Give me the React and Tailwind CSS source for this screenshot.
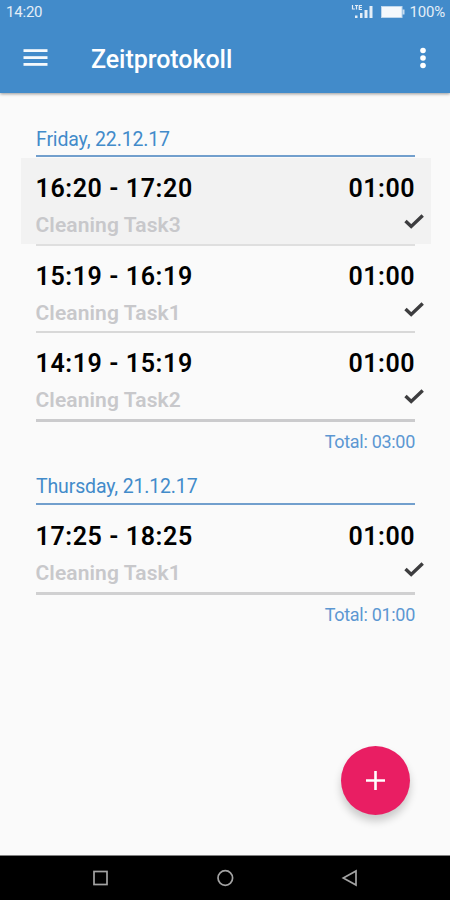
const days = [
  {
    label: 'Friday, 22.12.17',
    total: 'Total: 03:00',
    leading: 'leading-[34px]',
    entries: [
      { time: '16:20 - 17:20', task: 'Cleaning Task3', row: 'mt-px h-[88px]', active: true, line: 'h-[2px] bg-[#dfdfdf]' },
      { time: '15:19 - 16:19', task: 'Cleaning Task1', row: 'h-[87px]', line: 'h-[2px] bg-[#d8d8d8]' },
      { time: '14:19 - 15:19', task: 'Cleaning Task2', row: 'h-[89px]', line: 'h-[3px] bg-[#cbcbcd]' },
    ],
  },
  {
    label: 'Thursday, 21.12.17',
    total: 'Total: 01:00',
    leading: 'leading-[32px]',
    entries: [
      { time: '17:25 - 18:25', task: 'Cleaning Task1', row: 'mt-px h-[89px]', line: 'h-[3px] bg-[#d0d0d1]' },
    ],
  },
];

function StatusBar() {
  return (
    <div className="flex h-6 items-center pl-[6px] pr-[5px] text-[15px] tracking-[-0.2px] text-[#e4eef7]">
      <span>14:20</span>
      <svg className="ml-auto" width="22" height="16" viewBox="0 0 22 16" fill="#e4eef7">
        <path
          d="M1.500 1v4h2.400M4 1.500h3M5.500 1.500V5.500M11 1.500H8.300v4H11M8.300 3.500h2.500"
          fill="none"
          stroke="#e4eef7"
          strokeWidth="1.200"
        />
        <rect x="4" y="11.500" width="2.500" height="2.500" />
        <rect x="9" y="9" width="2.500" height="5" />
        <rect x="13.500" y="6" width="3" height="8" />
        <rect x="18.500" y="2" width="3" height="12" />
      </svg>
      <svg className="ml-[8px]" width="24" height="14" viewBox="0 0 24 14">
        <rect x="0.500" y="1.500" width="20.500" height="11" fill="#f4f8fc" stroke="#bdd6ec" />
        <rect x="21.500" y="4.500" width="2" height="5" fill="#c6dcef" />
      </svg>
      <span className="ml-[5px]">100%</span>
    </div>
  );
}

function Header() {
  return (
    <header className="h-[93px] bg-[#428bca] shadow-[0_1px_3px_rgba(0,0,0,0.4)]">
      <StatusBar />
      <div className="flex h-[68px] items-center pl-[23px] pr-[22px] text-white">
        <svg width="25" height="18" viewBox="0 0 25 18" fill="#f5f9fc">
          <rect x="0.500" y="0.200" width="24" height="2.800" />
          <rect x="0.500" y="7.200" width="24" height="2.800" />
          <rect x="0.500" y="14" width="24" height="2.800" />
        </svg>
        <h1 className="ml-[43px] mt-[3px] text-[25px] font-medium tracking-[-0.05px]">Zeitprotokoll</h1>
        <svg className="ml-auto" width="10" height="22" viewBox="0 0 10 22" fill="#fff">
          <circle cx="5" cy="3.500" r="2.800" />
          <circle cx="5" cy="11" r="2.800" />
          <circle cx="5" cy="18.500" r="2.800" />
        </svg>
      </div>
    </header>
  );
}

function Entry({ entry }) {
  return (
    <li className={`relative ml-[21px] mr-[19px] pl-[15px] pr-4 pt-[14px] ${entry.row}`}>
      {entry.active && <div className="absolute inset-x-0 top-0 -z-10 h-[86px] bg-[#f2f2f2]" />}
      <div className="flex justify-between text-[25px] font-semibold leading-[34px] text-black">
        <span className="-ml-[0.5px] tracking-[0.6px]">{entry.time}</span>
        <span className="tracking-[0.5px]">01:00</span>
      </div>
      <div className="-mr-[9px] flex justify-between">
        <span className="-ml-[0.5px] text-[21px] font-semibold leading-[38px] tracking-[0.1px] text-[#c8c8cb]">{entry.task}</span>
        <svg className="mt-[7px]" width="20" height="18" viewBox="0 0 20 18" fill="none" stroke="#3d3d3f" strokeWidth="3.400">
          <path d="M1.500 8L7.200 13.500L18.700 2.500" />
        </svg>
      </div>
      <div className={`absolute bottom-0 left-[15px] right-4 ${entry.line}`} />
    </li>
  );
}

function Day({ day }) {
  return (
    <section>
      <h2 className={`ml-9 mr-[35px] h-[34px] whitespace-nowrap border-b-2 border-[#729fcd] text-[19.500px] tracking-[-0.15px] text-[#428bca] ${day.leading}`}>
        {day.label}
      </h2>
      <ul>
        {day.entries.map((entry) => (
          <Entry key={entry.time} entry={entry} />
        ))}
      </ul>
      <div className="pr-[35px] text-right text-[18px] leading-[40px] tracking-[-0.3px] text-[#5c97d2]">{day.total}</div>
    </section>
  );
}

export default function App() {
  return (
    <div className="relative isolate flex h-[900px] w-[450px] flex-col overflow-hidden bg-[#fafafa] font-['Roboto','Liberation_Sans',sans-serif]">
      <Header />
      <main className="flex flex-1 flex-col gap-[9px] pt-[30px]">
        {days.map((day) => (
          <Day key={day.label} day={day} />
        ))}
      </main>
      <button
        aria-label="Add"
        className="absolute bottom-[85px] right-10 flex size-[69px] items-center justify-center rounded-full bg-[#e91e63] shadow-[0_6px_8px_rgba(0,0,0,0.2)]"
      >
        <svg width="19" height="19" viewBox="0 0 19 19" stroke="#fff" strokeWidth="2.600">
          <path d="M9.500 0v19M0 9.500h19" />
        </svg>
      </button>
      <nav className="flex h-[45px] items-center justify-between border-t border-[#808080] bg-black pl-[92px] pr-[91px]">
        <svg width="17" height="18" viewBox="0 0 17 18" fill="none" stroke="#a3a3a3" strokeWidth="1.700">
          <rect x="2" y="2.500" width="13" height="13" />
        </svg>
        <svg width="18" height="18" viewBox="0 0 18 18" fill="none" stroke="#a3a3a3" strokeWidth="1.700">
          <circle cx="9.300" cy="9" r="7.300" />
        </svg>
        <svg width="18" height="18" viewBox="0 0 18 18" fill="none" stroke="#a3a3a3" strokeWidth="1.700">
          <path d="M15 2v14L2.300 9z" />
        </svg>
      </nav>
    </div>
  );
}
